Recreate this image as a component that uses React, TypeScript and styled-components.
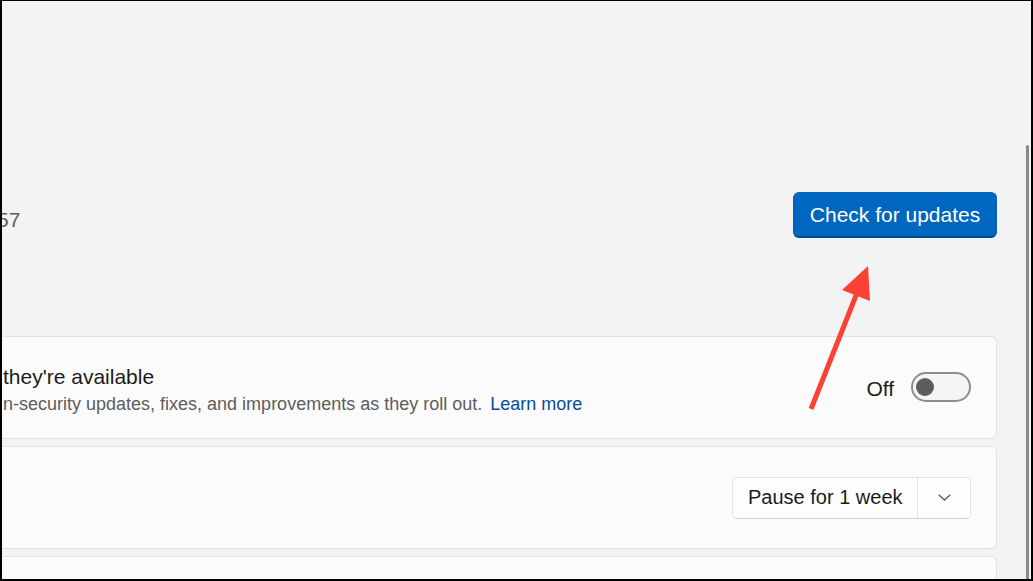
import styled, { createGlobalStyle } from "styled-components";

const GlobalStyle = createGlobalStyle`
  html, body {
    margin: 0;
    padding: 0;
    height: 100%;
    overflow: hidden;
  }

  body {
    font-family: "Liberation Sans", Arial, sans-serif;
    background: #000;
  }

  #root {
    height: 100%;
  }
`;

const Root = styled.div`
  position: relative;
  width: 100vw;
  height: 100vh;
`;

const Frame = styled.div`
  box-sizing: border-box;
  height: 100%;
  display: flex;
  border: 2px solid #000;
  border-top-width: 1px;
  background: #f3f3f3;
`;

const Content = styled.main`
  flex: 1;
  min-width: 0;
  overflow: hidden;
  display: flex;
  flex-direction: column;
  padding: 191px 24px 0 0;
`;

const ScrollTrack = styled.div`
  width: 10px;
  flex-shrink: 0;
  display: flex;
  padding: 144px 0 0 5px;
  box-sizing: border-box;
`;

const ScrollThumb = styled.div`
  width: 3px;
  background: #8a8a8a;
  border-radius: 2px 2px 0 0;
`;

const StatusRow = styled.section`
  flex-shrink: 0;
  display: flex;
  align-items: center;
  justify-content: space-between;
  height: 46px;
`;

const StatusText = styled.span`
  margin-left: -5px;
  padding-top: 10px;
  font-size: 21px;
  line-height: 28px;
  color: #5d5d5d;
  white-space: nowrap;
`;

const AccentButton = styled.button`
  box-sizing: border-box;
  width: 204px;
  height: 46px;
  padding: 0;
  border: 1px solid #0a63b3;
  border-bottom: 2px solid #004a8a;
  border-radius: 6px;
  background: #0067c0;
  color: #fff;
  font-family: inherit;
  font-size: 21px;
  cursor: pointer;
`;

const Card = styled.div<{ $gap: number }>`
  box-sizing: border-box;
  flex-shrink: 0;
  height: 103px;
  margin-top: ${({ $gap }) => $gap}px;
  display: flex;
  align-items: center;
  justify-content: space-between;
  padding: 0 25px 0 1px;
  background: #fbfbfb;
  border: 1px solid #e3e3e3;
  border-left: none;
  border-radius: 0 6px 6px 0;
`;

const CardText = styled.div`
  display: flex;
  flex-direction: column;
  padding-top: 3px;
  white-space: nowrap;
`;

const CardTitle = styled.div`
  font-size: 21px;
  line-height: 28px;
  color: #1b1b1b;
  margin-bottom: 1px;
`;

const CardDesc = styled.div`
  font-size: 18px;
  line-height: 24px;
  color: #5d5d5d;
`;

const Link = styled.a`
  margin-left: 8px;
  color: #0b4a99;
  text-decoration: none;
`;

const ToggleGroup = styled.div`
  display: flex;
  align-items: center;
  gap: 17px;
  font-size: 21px;
  color: #1b1b1b;
  padding-top: 2px;
`;

const Toggle = styled.div`
  box-sizing: border-box;
  width: 60px;
  height: 30px;
  display: flex;
  align-items: center;
  padding-left: 3px;
  border: 2px solid #8e8e8e;
  border-radius: 15px;
  background: #f5f5f5;
  margin-top: -4px;
`;

const Knob = styled.span`
  width: 18px;
  height: 18px;
  border-radius: 50%;
  background: #5d5d5d;
`;

const SplitButton = styled.div`
  box-sizing: border-box;
  height: 42px;
  display: flex;
  margin-left: auto;
  background: #fefefe;
  border: 1px solid #e3e3e3;
  border-bottom-color: #cfcfcf;
  border-radius: 5px;
`;

const SplitLabel = styled.span`
  box-sizing: border-box;
  width: 185px;
  display: flex;
  align-items: center;
  padding-left: 15px;
  font-size: 20px;
  color: #1b1b1b;
  border-right: 1px solid #e3e3e3;
  white-space: nowrap;
`;

const SplitChevron = styled.span`
  width: 52px;
  display: grid;
  place-items: center;
  color: #5d5d5d;
`;

const Annotation = styled.svg`
  position: absolute;
  left: 0;
  top: 0;
  pointer-events: none;
`;

export default function App() {
  return (
    <Root>
      <GlobalStyle />
      <Frame>
        <Content>
          <StatusRow>
            <StatusText>57</StatusText>
            <AccentButton type="button">Check for updates</AccentButton>
          </StatusRow>

          <Card $gap={98}>
            <CardText>
              <CardTitle>they're available</CardTitle>
              <CardDesc>
                n-security updates, fixes, and improvements as they roll out.
                <Link href="#">Learn more</Link>
              </CardDesc>
            </CardText>
            <ToggleGroup>
              Off
              <Toggle>
                <Knob />
              </Toggle>
            </ToggleGroup>
          </Card>

          <Card $gap={7}>
            <SplitButton>
              <SplitLabel>Pause for 1 week</SplitLabel>
              <SplitChevron>
                <svg width="13" height="7" viewBox="0 0 13 7" fill="none">
                  <polyline
                    points="0.7,0.7 6.5,6 12.3,0.7"
                    stroke="currentColor"
                    strokeWidth="1.3"
                  />
                </svg>
              </SplitChevron>
            </SplitButton>
          </Card>

          <Card $gap={7} />
        </Content>
        <ScrollTrack>
          <ScrollThumb />
        </ScrollTrack>
      </Frame>

      <Annotation width="1033" height="581" viewBox="0 0 1033 581">
        <line x1="811" y1="409" x2="857" y2="293" stroke="#fb4135" strokeWidth="5" />
        <polygon points="868,266 842,290 870,301" fill="#fb4135" />
      </Annotation>
    </Root>
  );
}
